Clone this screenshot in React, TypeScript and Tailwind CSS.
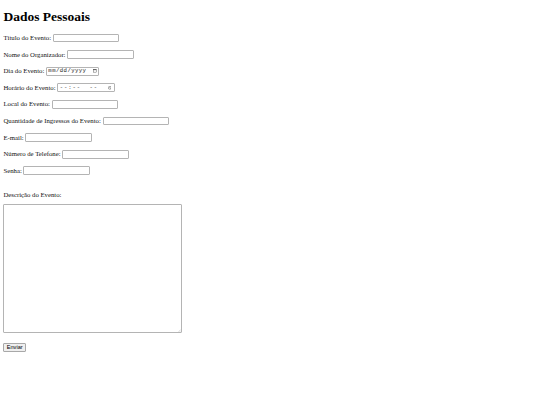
import React from "react";

type Kind = "text" | "date" | "time" | "password";

const rows: { label: string; kind: Kind }[] = [
  { label: "Título do Evento:", kind: "text" },
  { label: "Nome do Organizador:", kind: "text" },
  { label: "Dia do Evento:", kind: "date" },
  { label: "Horário do Evento:", kind: "time" },
  { label: "Local do Evento:", kind: "text" },
  { label: "Quantidade de Ingressos do Evento:", kind: "text" },
  { label: "E-mail:", kind: "text" },
  { label: "Número de Telefone:", kind: "text" },
  { label: "Senha:", kind: "password" },
];

function Field({ kind }: { kind: Kind }) {
  if (kind === "date") {
    return (
      <div className="flex h-[8.86px] w-[53.4px] items-center rounded-[1px] border border-[#b4b4b4] bg-white pl-[1.4px] pr-[1.6px]">
        <span className="font-['Liberation_Mono',monospace] text-[5.6px] leading-none tracking-[0.45px] text-[#222]">
          mm/dd/yyyy
        </span>
        <svg className="ml-auto h-[3.4px] w-[3.6px]" viewBox="0 0 8 8" fill="none">
          <rect x="0.6" y="1" width="6.8" height="6.4" stroke="#333" strokeWidth="0.9" />
          <rect x="0.6" y="1" width="6.8" height="1.6" fill="#333" />
        </svg>
      </div>
    );
  }
  if (kind === "time") {
    return (
      <div className="flex h-[8.86px] w-[57.6px] items-center rounded-[1px] border border-[#b4b4b4] bg-white pl-[1.6px] pr-[2.4px]">
        <span className="font-['Liberation_Mono',monospace] text-[5.6px] leading-none tracking-[0.9px] text-[#333]">
          --:--&nbsp;&nbsp;--
        </span>
        <svg className="ml-auto h-[3.6px] w-[3.6px]" viewBox="0 0 8 8" fill="none">
          <circle cx="4" cy="4" r="3.3" stroke="#333" strokeWidth="0.9" />
          <path d="M4 2v2.2l1.5 1" stroke="#333" strokeWidth="0.9" />
        </svg>
      </div>
    );
  }
  return (
    <input
      type={kind === "password" ? "password" : "text"}
      className="block h-[8.86px] w-[66.6px] rounded-[1px] border border-[#b4b4b4] bg-white outline-none"
    />
  );
}

export default function App() {
  return (
    <div className="min-h-screen w-full bg-white pl-[3.4px] pt-[9px] font-['Liberation_Serif','Times_New_Roman',serif] text-black">
      <h1 className="text-[13.5px] font-bold leading-[15.5px]">Dados Pessoais</h1>
      <form className="mt-[9.05px] flex flex-col items-start" onSubmit={(e) => e.preventDefault()}>
        <div className="flex flex-col items-start gap-[7.74px]">
          {rows.map((r) => (
            <div key={r.label} className="flex h-[8.86px] items-center gap-[1.7px]">
              <label className="whitespace-nowrap text-[6.75px] leading-[7.76px] text-[#111]">{r.label}</label>
              <Field kind={r.kind} />
            </div>
          ))}
        </div>
        <label className="mt-[15.5px] text-[6.75px] leading-[7.76px] text-[#111]">Descrição do Evento:</label>
        <div className="relative mt-[5.44px]">
          <textarea className="block h-[129.5px] w-[178.6px] resize-none rounded-[1px] border border-[#b4b4b4] bg-white outline-none" />
          <svg className="absolute bottom-[1.2px] right-[1.2px] h-[3px] w-[3px]" viewBox="0 0 6 6" fill="none">
            <path d="M5.5 1L1 5.5M5.5 3.5L3.5 5.5" stroke="#aaa" strokeWidth="0.8" />
          </svg>
        </div>
        <button
          type="submit"
          className="mt-[9.5px] flex h-[9px] w-[22.6px] items-center justify-center rounded-[1px] border border-[#a8a8a8] bg-[#efefef] font-['Liberation_Sans',Arial,sans-serif] text-[5.6px] leading-none text-black"
        >
          Enviar
        </button>
      </form>
    </div>
  );
}
